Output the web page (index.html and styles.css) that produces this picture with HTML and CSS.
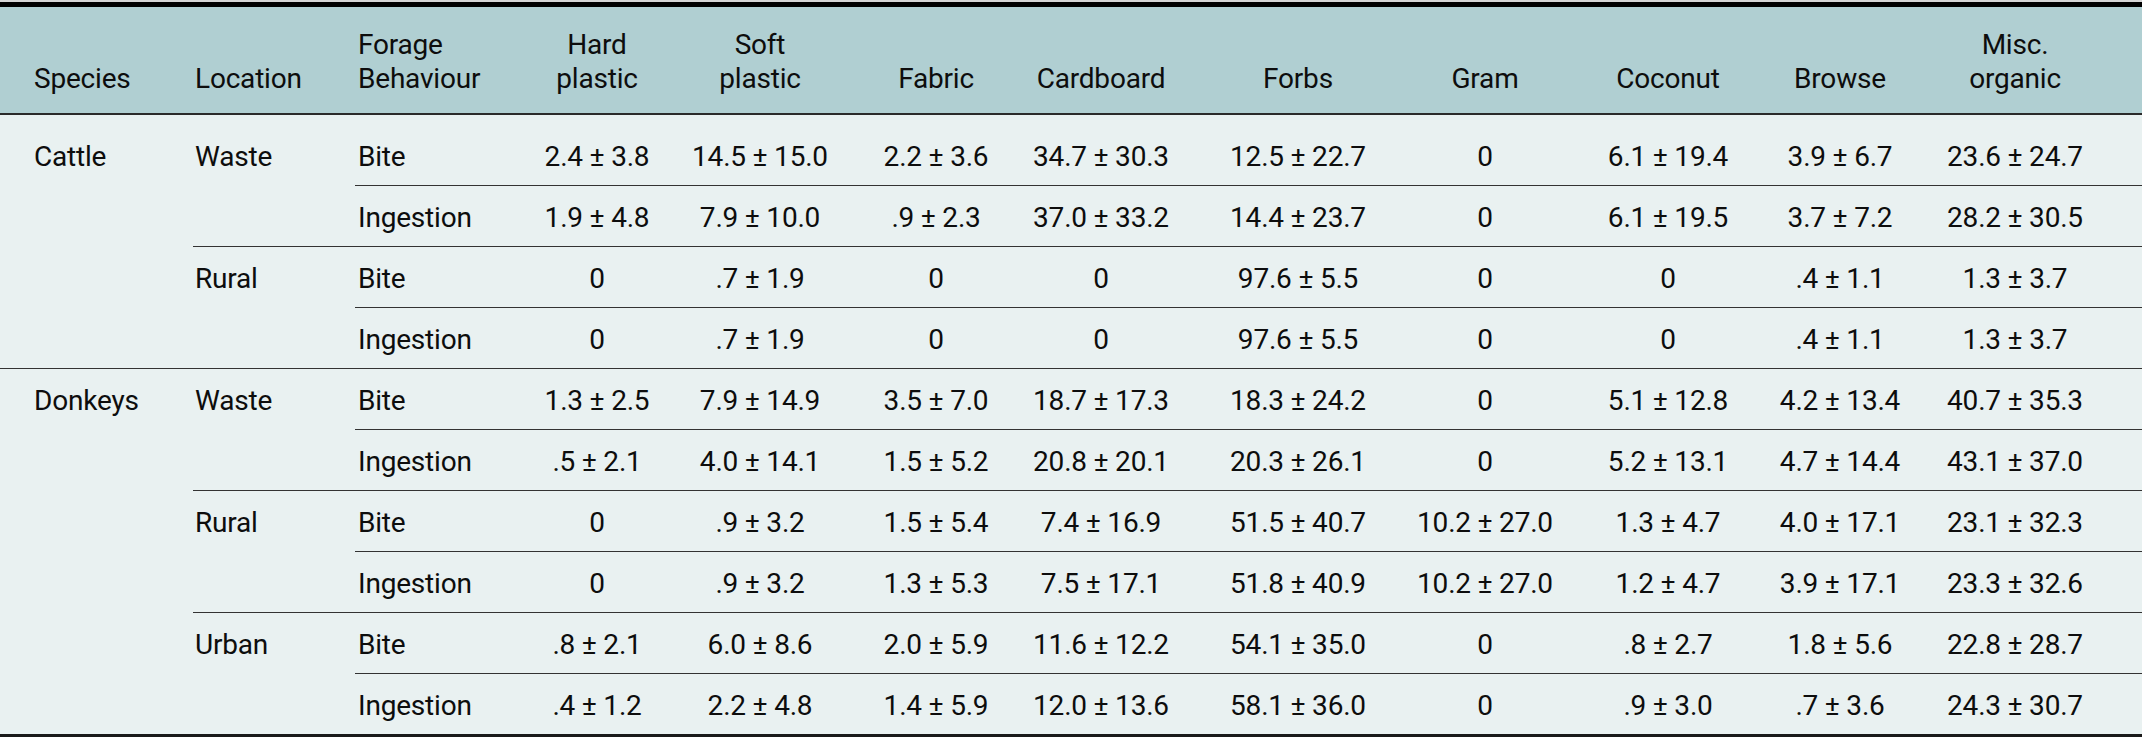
FILE: index.html
```html
<!DOCTYPE html>
<html lang="en">
<head>
<meta charset="utf-8">
<title>Forage behaviour table</title>
<link rel="stylesheet" href="styles.css">
</head>
<body>
<div class="wrap">
<table class="data">
  <colgroup>
    <col class="c-species"><col class="c-loc"><col class="c-beh">
    <col class="c-hard"><col class="c-soft"><col class="c-fabric"><col class="c-card">
    <col class="c-forbs"><col class="c-gram"><col class="c-coco"><col class="c-browse"><col class="c-misc">
  </colgroup>
  <thead>
    <tr>
      <th class="l l1">Species</th>
      <th class="l l2">Location</th>
      <th class="l l3">Forage<br>Behaviour</th>
      <th>Hard<br>plastic</th>
      <th>Soft<br>plastic</th>
      <th>Fabric</th>
      <th>Cardboard</th>
      <th>Forbs</th>
      <th>Gram</th>
      <th>Coconut</th>
      <th>Browse</th>
      <th class="last">Misc.<br>organic</th>
    </tr>
  </thead>
  <tbody>
    <tr class="first">
      <td class="l l1" rowspan="4">Cattle</td>
      <td class="l l2" rowspan="2">Waste</td>
      <td class="l l3">Bite</td>
      <td>2.4 ± 3.8</td><td>14.5 ± 15.0</td><td>2.2 ± 3.6</td><td>34.7 ± 30.3</td><td>12.5 ± 22.7</td><td>0</td><td>6.1 ± 19.4</td><td>3.9 ± 6.7</td><td class="last">23.6 ± 24.7</td>
    </tr>
    <tr>
      <td class="l l3">Ingestion</td>
      <td>1.9 ± 4.8</td><td>7.9 ± 10.0</td><td>.9 ± 2.3</td><td>37.0 ± 33.2</td><td>14.4 ± 23.7</td><td>0</td><td>6.1 ± 19.5</td><td>3.7 ± 7.2</td><td class="last">28.2 ± 30.5</td>
    </tr>
    <tr>
      <td class="l l2" rowspan="2">Rural</td>
      <td class="l l3">Bite</td>
      <td>0</td><td>.7 ± 1.9</td><td>0</td><td>0</td><td>97.6 ± 5.5</td><td>0</td><td>0</td><td>.4 ± 1.1</td><td class="last">1.3 ± 3.7</td>
    </tr>
    <tr>
      <td class="l l3">Ingestion</td>
      <td>0</td><td>.7 ± 1.9</td><td>0</td><td>0</td><td>97.6 ± 5.5</td><td>0</td><td>0</td><td>.4 ± 1.1</td><td class="last">1.3 ± 3.7</td>
    </tr>
    <tr>
      <td class="l l1" rowspan="6">Donkeys</td>
      <td class="l l2" rowspan="2">Waste</td>
      <td class="l l3">Bite</td>
      <td>1.3 ± 2.5</td><td>7.9 ± 14.9</td><td>3.5 ± 7.0</td><td>18.7 ± 17.3</td><td>18.3 ± 24.2</td><td>0</td><td>5.1 ± 12.8</td><td>4.2 ± 13.4</td><td class="last">40.7 ± 35.3</td>
    </tr>
    <tr>
      <td class="l l3">Ingestion</td>
      <td>.5 ± 2.1</td><td>4.0 ± 14.1</td><td>1.5 ± 5.2</td><td>20.8 ± 20.1</td><td>20.3 ± 26.1</td><td>0</td><td>5.2 ± 13.1</td><td>4.7 ± 14.4</td><td class="last">43.1 ± 37.0</td>
    </tr>
    <tr>
      <td class="l l2" rowspan="2">Rural</td>
      <td class="l l3">Bite</td>
      <td>0</td><td>.9 ± 3.2</td><td>1.5 ± 5.4</td><td>7.4 ± 16.9</td><td>51.5 ± 40.7</td><td>10.2 ± 27.0</td><td>1.3 ± 4.7</td><td>4.0 ± 17.1</td><td class="last">23.1 ± 32.3</td>
    </tr>
    <tr>
      <td class="l l3">Ingestion</td>
      <td>0</td><td>.9 ± 3.2</td><td>1.3 ± 5.3</td><td>7.5 ± 17.1</td><td>51.8 ± 40.9</td><td>10.2 ± 27.0</td><td>1.2 ± 4.7</td><td>3.9 ± 17.1</td><td class="last">23.3 ± 32.6</td>
    </tr>
    <tr>
      <td class="l l2" rowspan="2">Urban</td>
      <td class="l l3">Bite</td>
      <td>.8 ± 2.1</td><td>6.0 ± 8.6</td><td>2.0 ± 5.9</td><td>11.6 ± 12.2</td><td>54.1 ± 35.0</td><td>0</td><td>.8 ± 2.7</td><td>1.8 ± 5.6</td><td class="last">22.8 ± 28.7</td>
    </tr>
    <tr>
      <td class="l l3">Ingestion</td>
      <td>.4 ± 1.2</td><td>2.2 ± 4.8</td><td>1.4 ± 5.9</td><td>12.0 ± 13.6</td><td>58.1 ± 36.0</td><td>0</td><td>.9 ± 3.0</td><td>.7 ± 3.6</td><td class="last">24.3 ± 30.7</td>
    </tr>
  </tbody>
</table>
</div>
</body>
</html>
```

FILE: styles.css
```css
html, body {
  margin: 0;
  padding: 0;
  background: #ffffff;
}

.wrap {
  border-top: 2px solid #d4d4d4;
}

.data {
  width: 2142px;
  table-layout: fixed;
  border-collapse: collapse;
  border-top: 5px solid #000;
  border-bottom: 3px solid #1a1a1a;
  font-family: Roboto, "Liberation Sans", sans-serif;
  font-size: 28px;
  line-height: 34px;
  letter-spacing: -0.2px;
  color: #0d0d0d;
}

.c-species { width: 193px; }
.c-loc { width: 162px; }
.c-beh { width: 183px; }
.c-hard { width: 118px; }
.c-soft { width: 208px; }
.c-fabric { width: 144px; }
.c-card { width: 186px; }
.c-forbs { width: 208px; }
.c-gram { width: 166px; }
.c-coco { width: 200px; }
.c-browse { width: 144px; }
.c-misc { width: 230px; }

.data th {
  background: #b0cfd2;
  font-weight: 400;
  text-align: center;
  vertical-align: bottom;
  padding: 21px 0 17px;
  border-bottom: 2px solid #2a2a2a;
}

.data td {
  background: #e9f1f1;
  text-align: center;
  vertical-align: top;
  padding: 15px 0 11px;
  border-bottom: 1px solid #333;
  white-space: nowrap;
}

.data tr.first td {
  padding-top: 25px;
}

.data .l { text-align: left; }
.data .l1 { padding-left: 34px; }
.data .l2 { padding-left: 2px; }
.data .l3 { padding-left: 3px; }
.data .last { padding-right: 24px; }
```
